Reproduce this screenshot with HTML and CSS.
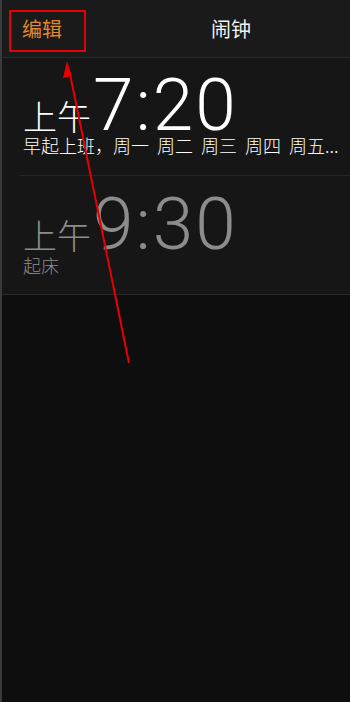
FILE: index.html
```html
<!DOCTYPE html>
<html lang="zh-CN">
<head>
    <meta charset="UTF-8">
    <meta name="viewport" content="width=device-width, initial-scale=1.0">
    <title>闹钟</title>
    <link rel="stylesheet" href="styles.css">
</head>
<body>
    <div class="screen">
        <div class="nav-bar">
            <a href="#" class="nav-edit">编辑</a>
            <div class="nav-title">闹钟</div>
        </div>

        <div class="alarm-list">
            <div class="alarm-item">
                <div class="alarm-time">
                    <span class="alarm-period">上午</span>
                    <span class="alarm-clock">7:20</span>
                </div>
                <div class="alarm-label">早起上班，周一 周二 周三 周四 周五...</div>
            </div>
            <div class="alarm-item alarm-off">
                <div class="alarm-time">
                    <span class="alarm-period">上午</span>
                    <span class="alarm-clock">9:30</span>
                </div>
                <div class="alarm-label">起床</div>
            </div>
        </div>

        <!-- annotation drawn on top of the screenshot -->
        <svg class="annotation" width="350" height="702" viewBox="0 0 350 702">
            <rect x="10" y="11" width="75" height="40" fill="none" stroke="#e60000" stroke-width="2"/>
            <line x1="129" y1="363" x2="70" y2="74" stroke="#e60000" stroke-width="2"/>
            <polygon points="67,61 72,76 63,78" fill="#e60000"/>
        </svg>
    </div>
</body>
</html>
```

FILE: styles.css
```css
* {
    margin: 0;
    padding: 0;
    box-sizing: border-box;
}

body {
    font-family: "Noto Sans CJK SC", "Noto Sans", sans-serif;
    background: #0e0e0e;
    color: #ffffff;
    width: 350px;
    height: 702px;
    overflow: hidden;
}

.screen {
    position: relative;
    height: 702px;
    border-left: 2px solid #3a3a3a;
}

.nav-bar {
    display: flex;
    align-items: center;
    height: 58px;
    background: #1a1a1a;
    border-bottom: 1px solid #2a2a2a;
    padding-left: 20px;
}

.nav-edit {
    color: #e0892b;
    font-size: 20px;
    text-decoration: none;
}

.nav-title {
    flex: 1;
    text-align: center;
    padding-left: 50px;
    font-size: 20px;
    color: #f2f2f2;
}

.alarm-list {
    background: #161616;
    border-bottom: 1px solid #2a2a2a;
}

.alarm-item {
    height: 117px;
    padding: 17px 0 0 21px;
}

/* inset separator between rows */
.alarm-item + .alarm-item {
    background: linear-gradient(#262626, #262626) no-repeat 18px 0 / 100% 1px;
}

.alarm-time {
    display: flex;
    align-items: baseline;
    height: 60px;
}

.alarm-period {
    font-size: 34px;
    font-weight: 300;
    line-height: 34px;
    margin-right: 2px;
}

.alarm-clock {
    font-family: Roboto, "Noto Sans", sans-serif;
    font-size: 73px;
    font-weight: 300;
    line-height: 60px;
    letter-spacing: 2px;
}

.alarm-label {
    font-size: 18px;
    font-weight: 300;
    line-height: 18px;
    margin-top: 1px;
    white-space: nowrap;
    word-spacing: 4px;
}

.alarm-off {
    height: 119px;
    padding-top: 19px;
    color: #8c8c8c;
}

.alarm-off .alarm-label {
    margin-top: 2px;
}

.annotation {
    position: absolute;
    top: 0;
    left: -2px;
    pointer-events: none;
}
```
